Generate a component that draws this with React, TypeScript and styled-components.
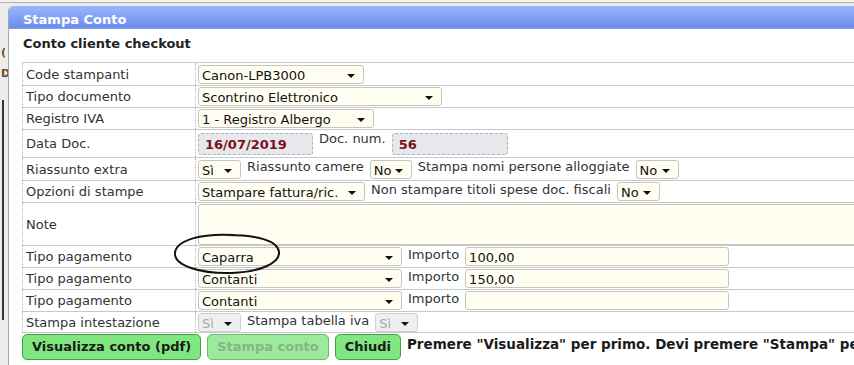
import React from 'react';
import styled, { createGlobalStyle, css } from 'styled-components';

const GlobalStyle = createGlobalStyle`
  html, body {
    margin: 0;
    padding: 0;
  }
  body {
    width: 854px;
    height: 365px;
    overflow: hidden;
    background: #ececec;
    font-family: 'DejaVu Sans', Verdana, sans-serif;
    font-size: 13px;
    color: #222;
  }
`;

const Page = styled.div`
  position: relative;
  width: 854px;
  height: 365px;
  overflow: hidden;
  background: linear-gradient(
    #f2f2f2 0,
    #f2f2f2 2px,
    #b8b2ad 2px,
    #b8b2ad 3px,
    #ececec 3px
  );
`;

const BehindMark = styled.span<{ $top: number }>`
  position: absolute;
  left: 1px;
  top: ${(p) => p.$top}px;
  font-size: 11px;
  font-weight: bold;
  color: #6b4a2a;
`;

const BehindLine = styled.div`
  position: absolute;
  left: 2px;
  top: 100px;
  width: 2px;
  height: 220px;
  background: #333;
`;

const Dialog = styled.div`
  position: absolute;
  left: 8px;
  top: 6px;
  width: 900px;
  height: 380px;
  background: #fff;
  border-left: 1px solid #a8a8a8;
  border-top-left-radius: 5px;
`;

const TitleBar = styled.div`
  height: 23px;
  box-sizing: border-box;
  padding: 5px 0 0 14px;
  background: linear-gradient(#97b8fb, #6c8bef);
  border-top-left-radius: 5px;
  border-bottom: 1px solid #8c9ed8;
  color: #fff;
  font-weight: bold;
  font-size: 13px;
  line-height: 17px;
`;

const Content = styled.div`
  padding: 0 0 0 13px;
`;

const Heading = styled.div`
  margin: 7px 0 10px 1px;
  font-weight: bold;
  font-size: 13px;
  line-height: 16px;
  color: #222;
`;

const Grid = styled.div`
  width: 880px;
  border-top: 1px solid #c8c8c8;
`;

const Row = styled.div<{ $h: number }>`
  display: grid;
  grid-template-columns: 174px 1fr;
  height: ${(p) => p.$h}px;
  box-sizing: border-box;
  border-bottom: 1px solid #c8c8c8;
`;

const Label = styled.div`
  display: flex;
  align-items: center;
  padding-left: 3px;
  border-left: 1px dotted #b4b4b4;
  border-right: 1px dotted #b4b4b4;
  color: #333;
  white-space: nowrap;
`;

const Field = styled.div`
  display: flex;
  align-items: center;
  gap: 6px;
  padding-left: 2px;
  white-space: nowrap;
`;

const Inline = styled.span`
  align-self: flex-start;
  line-height: 16px;
  margin-top: 1px;
  color: #333;
`;

const Select = styled.div<{ $w: number; $disabled?: boolean }>`
  position: relative;
  width: ${(p) => p.$w}px;
  height: 19px;
  box-sizing: border-box;
  padding: 2px 0 0 3px;
  line-height: 16px;
  background: #fffef0;
  border: 1px solid #c4c4c4;
  border-radius: 3px;
  color: #111;
  overflow: hidden;

  &::after {
    content: '';
    position: absolute;
    right: 8px;
    top: 8px;
    border-left: 4px solid transparent;
    border-right: 4px solid transparent;
    border-top: 4px solid #111;
  }

  ${(p) =>
    p.$disabled &&
    css`
      background: #efefef;
      color: #a8a8a8;
      border-color: #cfcfcf;
    `}
`;

const Input = styled.div<{ $w?: number; $h?: number; $locked?: boolean }>`
  width: ${(p) => (p.$w ? `${p.$w}px` : '100%')};
  height: ${(p) => p.$h ?? 19}px;
  box-sizing: border-box;
  padding: 2px 0 0 3px;
  line-height: 16px;
  background: #fffef0;
  border: 1px solid #c4c4c4;
  border-radius: 3px;
  color: #111;

  ${(p) =>
    p.$locked &&
    css`
      padding: 3px 0 0 6px;
      background: #e7e8ec;
      border: 1px dashed #b2b2b8;
      color: #7a1018;
      font-weight: bold;
    `}
`;

const Actions = styled.div`
  display: flex;
  align-items: flex-start;
  gap: 6px;
  margin-top: 1px;
`;

const Button = styled.div<{ $disabled?: boolean }>`
  height: 26px;
  box-sizing: border-box;
  padding: 0 9px;
  line-height: 24px;
  background: #80e680;
  border: 1px solid #4a9e4a;
  border-radius: 5px;
  font-weight: bold;
  font-size: 13px;
  color: #1a1a1a;
  white-space: nowrap;

  ${(p) =>
    p.$disabled &&
    css`
      background: #9cea9c;
      border-color: #6cbc6c;
      color: #86b486;
    `}
`;

const Hint = styled.div`
  margin: 2px 0 0 0;
  font-weight: bold;
  font-size: 13.5px;
  white-space: nowrap;
  color: #1a1a1a;
`;

const Annotation = styled.svg`
  position: absolute;
  left: 172px;
  top: 232px;
  overflow: visible;
`;

const payments = [
  { pay: 'Caparra', amount: '100,00' },
  { pay: 'Contanti', amount: '150,00' },
  { pay: 'Contanti', amount: '' },
];

export default function App() {
  return (
    <>
      <GlobalStyle />
      <Page>
        <BehindMark $top={46}>(</BehindMark>
        <BehindMark $top={67}>D</BehindMark>
        <BehindLine />
        <Dialog>
          <TitleBar>Stampa Conto</TitleBar>
          <Content>
            <Heading>Conto cliente checkout</Heading>
            <Grid>
              <Row $h={23}>
                <Label>Code stampanti</Label>
                <Field>
                  <Select $w={166}>Canon-LPB3000</Select>
                </Field>
              </Row>
              <Row $h={22}>
                <Label>Tipo documento</Label>
                <Field>
                  <Select $w={244}>Scontrino Elettronico</Select>
                </Field>
              </Row>
              <Row $h={22}>
                <Label>Registro IVA</Label>
                <Field>
                  <Select $w={176}>1 - Registro Albergo</Select>
                </Field>
              </Row>
              <Row $h={28}>
                <Label>Data Doc.</Label>
                <Field>
                  <Input $w={115} $h={22} $locked>16/07/2019</Input>
                  <Inline>Doc. num.</Inline>
                  <Input $w={116} $h={22} $locked>56</Input>
                </Field>
              </Row>
              <Row $h={23}>
                <Label>Riassunto extra</Label>
                <Field>
                  <Select $w={43}>Sì</Select>
                  <Inline>Riassunto camere</Inline>
                  <Select $w={42}>No</Select>
                  <Inline>Stampa nomi persone alloggiate</Inline>
                  <Select $w={43}>No</Select>
                </Field>
              </Row>
              <Row $h={22}>
                <Label>Opzioni di stampe</Label>
                <Field>
                  <Select $w={167}>Stampare fattura/ric.</Select>
                  <Inline>Non stampare titoli spese doc. fiscali</Inline>
                  <Select $w={43}>No</Select>
                </Field>
              </Row>
              <Row $h={43}>
                <Label>Note</Label>
                <Field>
                  <Input $h={41} />
                </Field>
              </Row>
              {payments.map((p, i) => (
                <Row $h={22} key={i}>
                  <Label>Tipo pagamento</Label>
                  <Field>
                    <Select $w={204}>{p.pay}</Select>
                    <Inline>Importo</Inline>
                    <Input $w={264}>{p.amount}</Input>
                  </Field>
                </Row>
              ))}
              <Row $h={21}>
                <Label>Stampa intestazione</Label>
                <Field>
                  <Select $w={43} $disabled>Sì</Select>
                  <Inline>Stampa tabella iva</Inline>
                  <Select $w={43} $disabled>Sì</Select>
                </Field>
              </Row>
            </Grid>
            <Actions>
              <Button>Visualizza conto (pdf)</Button>
              <Button $disabled>Stampa conto</Button>
              <Button>Chiudi</Button>
              <Hint>Premere "Visualizza" per primo. Devi premere "Stampa" per stampare</Hint>
            </Actions>
          </Content>
        </Dialog>
        <Annotation width="110" height="44" viewBox="0 0 110 44">
          <path
            d="M62 3 C 30 1, 4 8, 3 21 C 2 34, 30 42, 60 41 C 88 40, 108 31, 107 20 C 106 9, 86 3, 55 3"
            fill="none"
            stroke="#111"
            strokeWidth="2"
          />
        </Annotation>
      </Page>
    </>
  );
}
